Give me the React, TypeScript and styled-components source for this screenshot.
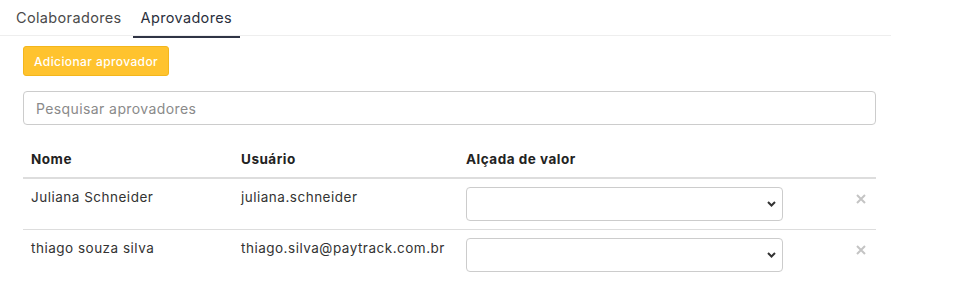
import React from 'react';
import styled, { createGlobalStyle } from 'styled-components';

const GlobalStyle = createGlobalStyle`
  body {
    margin: 0;
    background: #fff;
    font-family: Inter, "Noto Sans", sans-serif;
    color: #333;
  }
`;

const Panel = styled.div`
  width: 891px;
`;

const TabBar = styled.div`
  display: flex;
  gap: 3px;
  height: 35px;
  padding-left: 8px;
  border-bottom: 1px solid #eeeeee;
`;

const Tab = styled.div<{ $active?: boolean }>`
  height: 36px;
  line-height: 36px;
  padding: 0 8px;
  font-size: 14.5px;
  letter-spacing: 0.35px;
  color: ${p => (p.$active ? '#2a2f3d' : '#4a4a4a')};
  border-bottom: 2px solid ${p => (p.$active ? '#2f3445' : 'transparent')};
  margin-bottom: -3px;
  cursor: pointer;
`;

const Content = styled.div`
  padding: 10px 15px 0 23px;
  display: flex;
  flex-direction: column;
`;

const AddButton = styled.button`
  align-self: flex-start;
  height: 30px;
  padding: 0 10px;
  font-family: inherit;
  font-size: 12px;
  font-weight: 500;
  letter-spacing: 0.4px;
  color: #fff;
  background: #ffc32e;
  border: 1px solid #f3b61c;
  border-radius: 3px;
  cursor: pointer;
`;

const Search = styled.input`
  margin-top: 15px;
  height: 34px;
  box-sizing: border-box;
  padding: 0 12px;
  font-family: inherit;
  font-size: 14px;
  letter-spacing: 0.4px;
  color: #333;
  border: 1px solid #cccccc;
  border-radius: 4px;
  outline: none;
  &::placeholder {
    color: #8a8a8a;
  }
`;

const Table = styled.table`
  margin-top: 16px;
  width: 100%;
  table-layout: fixed;
  border-collapse: collapse;
  font-size: 13.5px;
  letter-spacing: 0.5px;
`;

// widths are content widths; each cell adds 8px padding on both sides
const Th = styled.th<{ $w?: number }>`
  text-align: left;
  padding: 8px;
  line-height: 20px;
  font-weight: 700;
  color: #222;
  border-bottom: 2px solid #dddddd;
  width: ${p => (p.$w ? `${p.$w}px` : 'auto')};
`;

const Td = styled.td`
  padding: 8px;
  line-height: 20px;
  vertical-align: top;
  color: #333;
  border-bottom: 1px solid #dddddd;
  white-space: nowrap;
`;

const Row = styled.tr`
  &:last-child td {
    border-bottom: none;
  }
`;

const SelectWrap = styled.div`
  position: relative;
  width: 317px;
`;

const Select = styled.select`
  display: block;
  width: 100%;
  height: 34px;
  appearance: none;
  background: #fff;
  border: 1px solid #cccccc;
  border-radius: 4px;
  font-family: inherit;
  font-size: 13px;
  padding: 0 28px 0 10px;
`;

const Chevron = styled.svg`
  position: absolute;
  right: 7px;
  top: 14px;
  pointer-events: none;
`;

const RemoveCell = styled(Td)`
  text-align: right;
  padding-right: 10px;
`;

const Remove = styled.button`
  border: none;
  background: none;
  padding: 0;
  margin-top: 5px;
  cursor: pointer;
`;

const approvers = [
  { name: 'Juliana Schneider', user: 'juliana.schneider' },
  { name: 'thiago souza silva', user: 'thiago.silva@paytrack.com.br' },
];

export default function App() {
  return (
    <Panel>
      <GlobalStyle />
      <TabBar>
        <Tab>Colaboradores</Tab>
        <Tab $active>Aprovadores</Tab>
      </TabBar>
      <Content>
        <AddButton>Adicionar aprovador</AddButton>
        <Search placeholder="Pesquisar aprovadores" />
        <Table>
          <thead>
            <tr>
              <Th $w={194}>Nome</Th>
              <Th $w={209}>Usuário</Th>
              <Th $w={317}>Alçada de valor</Th>
              <Th />
            </tr>
          </thead>
          <tbody>
            {approvers.map(a => (
              <Row key={a.user}>
                <Td>{a.name}</Td>
                <Td>{a.user}</Td>
                <Td>
                  <SelectWrap>
                    <Select defaultValue="">
                      <option value="" />
                    </Select>
                    <Chevron width="9" height="6" viewBox="0 0 9 6">
                      <path d="M1 1l3.5 3.5L8 1" fill="none" stroke="#333" strokeWidth="2" />
                    </Chevron>
                  </SelectWrap>
                </Td>
                <RemoveCell>
                  <Remove aria-label="Remover">
                    <svg width="10" height="10" viewBox="0 0 10 10">
                      <path d="M1 1l8 8M9 1l-8 8" stroke="#c4c4c4" strokeWidth="2" />
                    </svg>
                  </Remove>
                </RemoveCell>
              </Row>
            ))}
          </tbody>
        </Table>
      </Content>
    </Panel>
  );
}
